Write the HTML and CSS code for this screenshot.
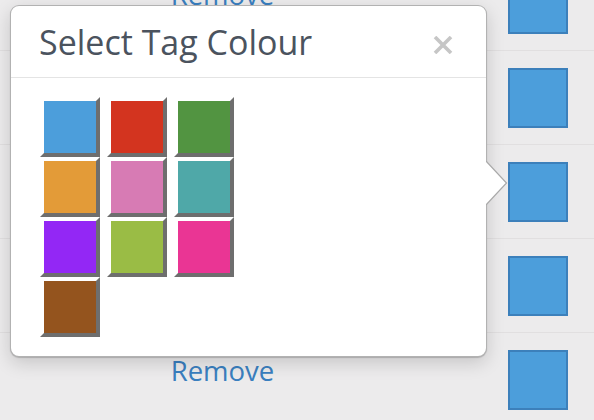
FILE: index.html
```html
<!DOCTYPE html>
<html>
<head>
<meta charset="utf-8">
<link rel="stylesheet" href="styles.css">
</head>
<body>
<div class="page">
  <div class="list">
    <div class="row"><a class="remove">Remove</a><span class="tag"></span></div>
    <div class="row"><a class="remove">Remove</a><span class="tag"></span></div>
    <div class="row"><a class="remove">Remove</a><span class="tag"></span></div>
    <div class="row"><a class="remove">Remove</a><span class="tag"></span></div>
    <div class="row"><a class="remove">Remove</a><span class="tag"></span></div>
  </div>

  <div class="popover">
    <div class="pop-header">
      <h3 class="pop-title">Select Tag Colour</h3>
      <span class="close" aria-label="Close">
        <svg width="20" height="18" viewBox="0 0 20 18"><path d="M2 1 L18 17 M18 1 L2 17" stroke="#c6c6c6" stroke-width="3.6" stroke-linecap="butt"/></svg>
      </span>
    </div>
    <div class="pop-body">
      <div class="swatches">
        <span class="swatch c-blue"></span>
        <span class="swatch c-red"></span>
        <span class="swatch c-green"></span>
        <span class="swatch c-orange"></span>
        <span class="swatch c-pink"></span>
        <span class="swatch c-teal"></span>
        <span class="swatch c-purple"></span>
        <span class="swatch c-lime"></span>
        <span class="swatch c-magenta"></span>
        <span class="swatch c-brown"></span>
      </div>
    </div>
    <svg class="arrow" width="22" height="44" viewBox="0 0 22 44"><polygon points="0,0 20.5,22 0,44" fill="#fff"/><polyline points="0,0 20.5,22 0,44" fill="none" stroke="#a9a9a9" stroke-width="1.2"/></svg>
  </div>
</div>
</body>
</html>
```

FILE: styles.css
```css
html, body {
  margin: 0;
  padding: 0;
}
body {
  background: #ecebec;
  font-family: "Open Sans", "Noto Sans", sans-serif;
  width: 594px;
  height: 420px;
  overflow: hidden;
}
.page {
  position: relative;
  width: 594px;
  height: 420px;
  overflow: hidden;
}
.list {
  margin-top: -43px;
}
.row {
  display: flex;
  align-items: flex-start;
  height: 94px;
  box-sizing: border-box;
  border-bottom: 1px solid #e1dfe0;
}
.remove {
  width: 445px;
  text-align: center;
  font-size: 27.5px;
  line-height: 1;
  margin-top: 24px;
  color: #3a7fbf;
}
.tag {
  width: 60px;
  height: 60px;
  box-sizing: border-box;
  margin-left: 63px;
  margin-top: 17px;
  background: #4c9edb;
  border: 2px solid #3c80bb;
}

.popover {
  position: absolute;
  left: 10px;
  top: 5px;
  width: 477px;
  box-sizing: border-box;
  background: #fff;
  border: 1px solid rgba(0, 0, 0, 0.3);
  border-radius: 9px;
  box-shadow: 0 1px 1px rgba(0, 0, 0, 0.18), 0 6px 18px rgba(0, 0, 0, 0.16);
}
.pop-header {
  height: 72px;
  box-sizing: border-box;
  padding: 16px 33px 0 28px;
  display: flex;
  align-items: flex-start;
  justify-content: space-between;
  border-bottom: 1px solid #e4e4e4;
}
.pop-title {
  margin: 0;
  font-size: 34px;
  line-height: 40px;
  font-weight: 400;
  color: #4b535e;
}
.close {
  display: flex;
  margin-top: 14px;
}
.pop-body {
  padding: 19px 29px 19px 29px;
}
.swatches {
  display: grid;
  grid-template-columns: repeat(3, 60px);
  column-gap: 7px;
  row-gap: 0;
}
.swatch {
  display: block;
  width: 60px;
  height: 60px;
  box-sizing: border-box;
  border: 4px solid;
  border-color: #fff #6e6e6e #6e6e6e #fff;
}
.c-blue { background: #4c9edb; }
.c-red { background: #d3341f; }
.c-green { background: #529441; }
.c-orange { background: #e39b38; }
.c-pink { background: #d77bb4; }
.c-teal { background: #4fa8a8; }
.c-purple { background: #9327f5; }
.c-lime { background: #9abc45; }
.c-magenta { background: #ea3594; }
.c-brown { background: #94541e; }

.arrow {
  position: absolute;
  left: 475px;
  top: 155px;
}
```
